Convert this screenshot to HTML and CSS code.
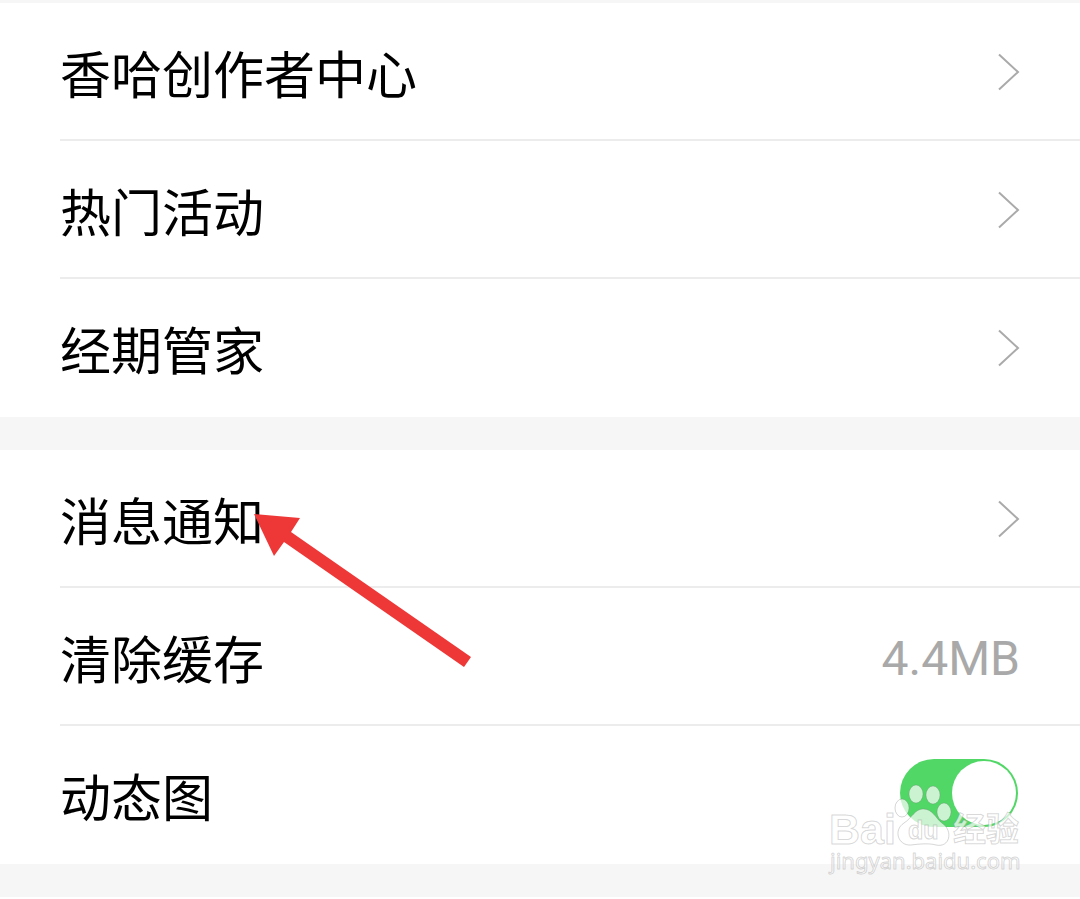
FILE: index.html
```
<!DOCTYPE html>
<html lang="zh-CN">
<head>
    <meta charset="utf-8">
    <meta name="viewport" content="width=device-width, initial-scale=1">
    <title>设置</title>
    <link rel="stylesheet" href="styles.css">
</head>
<body>
    <svg width="0" height="0" class="symbols" aria-hidden="true">
        <symbol id="chevron" viewBox="0 0 22 38">
            <path d="M1 1.5 L20 19 L1 36.5" fill="none" stroke="currentColor" stroke-width="2"/>
        </symbol>
    </svg>

    <main class="settings">
        <nav class="group">
            <a class="row" href="#creator">
                <span class="label">香哈创作者中心</span>
                <svg class="chevron" aria-hidden="true"><use href="#chevron"/></svg>
            </a>
            <a class="row" href="#events">
                <span class="label">热门活动</span>
                <svg class="chevron" aria-hidden="true"><use href="#chevron"/></svg>
            </a>
            <a class="row" href="#period">
                <span class="label">经期管家</span>
                <svg class="chevron" aria-hidden="true"><use href="#chevron"/></svg>
            </a>
        </nav>

        <section class="group">
            <a class="row" href="#notice">
                <span class="label">消息通知</span>
                <svg class="chevron" aria-hidden="true"><use href="#chevron"/></svg>
            </a>
            <button class="row" type="button">
                <span class="label">清除缓存</span>
                <span class="value">4.4MB</span>
            </button>
            <div class="row">
                <label class="label" for="motion">动态图</label>
                <input class="switch" id="motion" type="checkbox" role="switch" checked>
            </div>

            <svg class="arrow" viewBox="0 0 218 154" aria-hidden="true">
                <path d="M0 0 L46 4 L37 18 L217 143 L210 153 L30 28 L20 42 Z" fill="#ee3838"/>
            </svg>

            <svg class="watermark" viewBox="0 0 200 100" aria-hidden="true">
                <g class="mark">
                    <text class="mark-latin" x="3" y="64">Bai</text>
                    <ellipse cx="76" cy="28" rx="7" ry="9"/>
                    <ellipse cx="90" cy="14" rx="7" ry="9"/>
                    <ellipse cx="107" cy="15" rx="7" ry="9"/>
                    <ellipse cx="118" cy="32" rx="7" ry="9"/>
                    <path d="M97 29 C89 29 86 38 78 43 C67 50 72 66 85 65 C93 64 103 63 110 65 C124 68 127 51 117 44 C109 38 107 29 97 29 Z"/>
                    <text class="mark-du" x="82" y="59">du</text>
                    <text class="mark-han" x="127" y="61">经验</text>
                </g>
                <text class="mark mark-site" x="4" y="89">jingyan.baidu.com</text>
            </svg>
        </section>
    </main>
</body>
</html>
```
FILE: styles.css
```
* {
    box-sizing: border-box;
}

body {
    margin: 0;
    background-color: #fff;
    color: #000;
    font-family: "Noto Sans CJK SC", sans-serif;
}

.symbols {
    position: absolute;
}

.settings {
    border-top: 3px solid #f6f6f6;
}

.group {
    position: relative;
    border-bottom: 33px solid #f6f6f6;
}

.row {
    display: flex;
    align-items: center;
    justify-content: space-between;
    width: 100%;
    height: 138px;
    padding: 0 60px;
    border: 0;
    background: linear-gradient(#ececec, #ececec) 60px 100% / 100% 2px no-repeat;
    color: inherit;
    font: inherit;
    text-decoration: none;
}

.row:nth-child(3) {
    background: none;
}

.label {
    font-size: 51px;
    line-height: 72px;
}

.chevron {
    width: 22px;
    height: 38px;
    color: #aaa;
}

.value {
    padding-top: 4px;
    color: #a9a9a9;
    font-family: Roboto, sans-serif;
    font-size: 48px;
    line-height: 56px;
}

.switch {
    appearance: none;
    display: flex;
    align-items: center;
    width: 118px;
    height: 68px;
    margin: 0 2px 4px 0;
    padding: 2px;
    border-radius: 34px;
    background-color: #51d766;
    cursor: pointer;
}

.switch::before {
    content: "";
    width: 64px;
    height: 64px;
    border-radius: 50%;
    background-color: #fff;
}

.switch:checked {
    justify-content: flex-end;
}

.arrow {
    position: absolute;
    top: 64px;
    left: 254px;
    width: 218px;
    height: 154px;
    pointer-events: none;
}

.watermark {
    position: absolute;
    right: 54px;
    bottom: -16px;
    width: 200px;
    height: 100px;
    pointer-events: none;
}

.mark {
    fill: rgba(255, 255, 255, 0.7);
    stroke: rgba(120, 120, 120, 0.3);
    stroke-width: 1;
}

.mark-latin {
    font: bold 43px "Liberation Sans", sans-serif;
}

.mark-du {
    font: bold 25px "Liberation Sans", sans-serif;
}

.mark-han {
    font: bold 33px "Noto Sans CJK SC", sans-serif;
}

.mark-site {
    font: 22px "Noto Sans", sans-serif;
}
```
